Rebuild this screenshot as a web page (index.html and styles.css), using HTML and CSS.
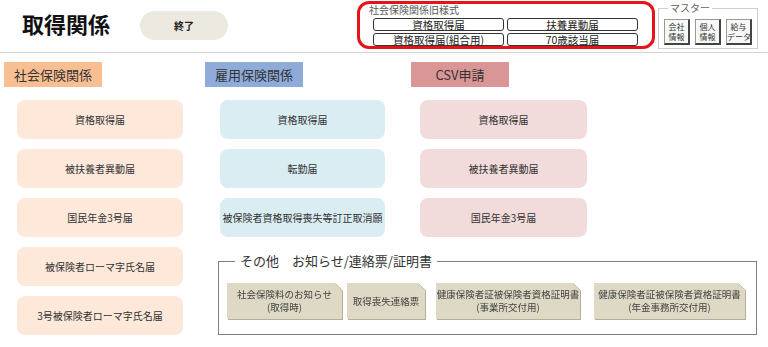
FILE: index.html
```html
<!DOCTYPE html>
<html lang="ja">
<head>
  <meta charset="UTF-8">
  <title>取得関係</title>
  <link rel="stylesheet" href="styles.css">
</head>
<body>
  <header class="topbar">
    <h1 class="title">取得関係</h1>
    <button type="button" class="pill">終了</button>

    <div class="legacy">
      <div class="legacy-label">社会保険関係旧様式</div>
      <div class="legacy-grid">
        <button type="button" class="legacy-btn">資格取得届</button>
        <button type="button" class="legacy-btn">扶養異動届</button>
        <button type="button" class="legacy-btn">資格取得届(組合用)</button>
        <button type="button" class="legacy-btn">70歳該当届</button>
      </div>
    </div>

    <fieldset class="master">
      <legend>マスター</legend>
      <div class="master-row">
        <button type="button" class="master-btn">会社<br>情報</button>
        <button type="button" class="master-btn">個人<br>情報</button>
        <button type="button" class="master-btn">給与<br>データ</button>
      </div>
    </fieldset>
  </header>

  <main class="board">
    <section class="col col-shaho">
      <h2 class="tag tag-orange">社会保険関係</h2>
      <div class="cards">
        <a class="card card-peach">資格取得届</a>
        <a class="card card-peach">被扶養者異動届</a>
        <a class="card card-peach">国民年金3号届</a>
        <a class="card card-peach">被保険者ローマ字氏名届</a>
        <a class="card card-peach">3号被保険者ローマ字氏名届</a>
      </div>
    </section>

    <div class="right">
      <div class="right-row">
        <section class="col col-koyo">
          <h2 class="tag tag-blue">雇用保険関係</h2>
          <div class="cards">
            <a class="card card-sky">資格取得届</a>
            <a class="card card-sky">転勤届</a>
            <a class="card card-sky">被保険者資格取得喪失等訂正取消願</a>
          </div>
        </section>

        <section class="col col-csv">
          <h2 class="tag tag-red">CSV申請</h2>
          <div class="cards">
            <a class="card card-rose">資格取得届</a>
            <a class="card card-rose">被扶養者異動届</a>
            <a class="card card-rose">国民年金3号届</a>
          </div>
        </section>
      </div>

      <fieldset class="others">
        <legend>その他　お知らせ/連絡票/証明書</legend>
        <div class="notes">
          <div class="note-wrap n1"><a class="note">社会保険料のお知らせ<br>(取得時)</a></div>
          <div class="note-wrap n2"><a class="note">取得喪失連絡票</a></div>
          <div class="note-wrap n3"><a class="note">健康保険者証被保険者資格証明書<br>(事業所交付用)</a></div>
          <div class="note-wrap n4"><a class="note">健康保険者証被保険者資格証明書<br>(年金事務所交付用)</a></div>
        </div>
      </fieldset>
    </div>
  </main>
</body>
</html>
```

FILE: styles.css
```css
/* Base */
body {
  margin: 0;
  background: #fff;
  color: #333;
  font-family: "Noto Sans CJK JP", "Noto Sans", sans-serif;
}

button {
  font-family: inherit;
  cursor: pointer;
}

/* Top bar */
.topbar {
  display: flex;
  align-items: flex-start;
  height: 52px;
  border-bottom: 1px solid #cfd3d6;
}

.title {
  margin: 8px 0 0 22px;
  font-size: 22px;
  line-height: 30px;
  font-weight: 700;
  color: #111;
}

.pill {
  margin: 11px 0 0 30px;
  width: 88px;
  height: 29px;
  border: none;
  border-radius: 15px;
  background: #ece9e0;
  font-size: 10px;
  font-weight: 700;
  color: #222;
}

/* legacy forms, red frame */
.legacy {
  box-sizing: border-box;
  margin: 1px 0 0 129px;
  width: 298px;
  height: 48px;
  border: 3px solid #e5131b;
  border-radius: 12px;
  padding: 0 0 0 9px;
}

.legacy-label {
  font-size: 10px;
  line-height: 12px;
  color: #555;
}

.legacy-grid {
  display: grid;
  grid-template-columns: 131px 131px;
  gap: 2px 3px;
  margin: 2px 0 0 4px;
}

.legacy-btn {
  height: 13px;
  padding: 0;
  border: 1px solid #333;
  border-radius: 3px;
  background: #fff;
  font-size: 10.5px;
  line-height: 11px;
  color: #222;
}

/* master */
.master {
  margin: 2px 0 0 3px;
  padding: 0 0 0 5px;
  width: 100px;
  height: 47px;
  box-sizing: border-box;
  border: 1px solid #cfcfcf;
  min-inline-size: 0;
}

.master legend {
  margin-left: 4px;
  padding: 0 2px;
  font-size: 10px;
  line-height: 12px;
  color: #666;
}

.master-row {
  display: flex;
  gap: 5px;
  margin-top: 5px;
}

.master-btn {
  box-sizing: border-box;
  width: 26px;
  height: 26px;
  padding: 0;
  border: 1px solid #999;
  border-right: 2px solid #444;
  border-bottom: 2px solid #444;
  background: #f8f8f8;
  font-size: 8px;
  line-height: 10px;
  color: #333;
  white-space: nowrap;
}

/* Board */
.board {
  display: flex;
  align-items: flex-start;
}

.col-shaho {
  width: 205px;
  padding-left: 4px;
  box-sizing: border-box;
}

.col-koyo {
  width: 206px;
}

.tag {
  margin: 9px 0 0 0;
  width: 98px;
  height: 25px;
  font-size: 13px;
  line-height: 25px;
  font-weight: 400;
  text-align: center;
  color: #333;
}

.tag-orange { background: #f9bf93; }
.tag-blue { background: #8eabda; }
.tag-red { background: #da9696; }

.cards {
  display: flex;
  flex-direction: column;
  gap: 10px;
  margin-top: 13px;
}

.card {
  display: flex;
  align-items: center;
  justify-content: center;
  height: 39px;
  border-radius: 8px;
  font-size: 10px;
  color: #333;
}

.col-shaho .cards { margin-left: 13px; width: 166px; }
.col-koyo .cards { margin-left: 15px; width: 165px; }
.col-csv .cards { margin-left: 9px; width: 167px; }

.card-peach { background: #fde8da; }
.card-sky { background: #daedf3; }
.card-rose { background: #f2dcdb; }

.right-row {
  display: flex;
  align-items: flex-start;
}

/* others */
.others {
  margin: 14px 0 0 13px;
  width: 539px;
  height: 84px;
  box-sizing: border-box;
  padding: 0;
  border: 1px solid #7f7f7f;
  min-inline-size: 0;
}

.others legend {
  margin-left: 16px;
  padding: 0 5px;
  font-size: 13px;
  line-height: 20px;
  color: #333;
}

.notes {
  display: flex;
  margin: 12px 0 0 8px;
}

.note-wrap {
  filter: drop-shadow(0 0 0.6px #8d8974) drop-shadow(1px 1px 0 #b4af98);
}

.note {
  display: flex;
  align-items: center;
  justify-content: center;
  height: 36px;
  background: #ddd9c4;
  font-size: 9.5px;
  line-height: 13px;
  text-align: center;
  color: #444;
  clip-path: polygon(0 0, calc(100% - 7px) 0, 100% 7px, 100% 100%, 0 100%);
}

.n1 .note { width: 115px; }
.n2 { margin-left: 5px; }
.n2 .note { width: 78px; }
.n3 { margin-left: 11px; }
.n3 .note { width: 144px; }
.n4 { margin-left: 14px; }
.n4 .note { width: 151px; }
```
